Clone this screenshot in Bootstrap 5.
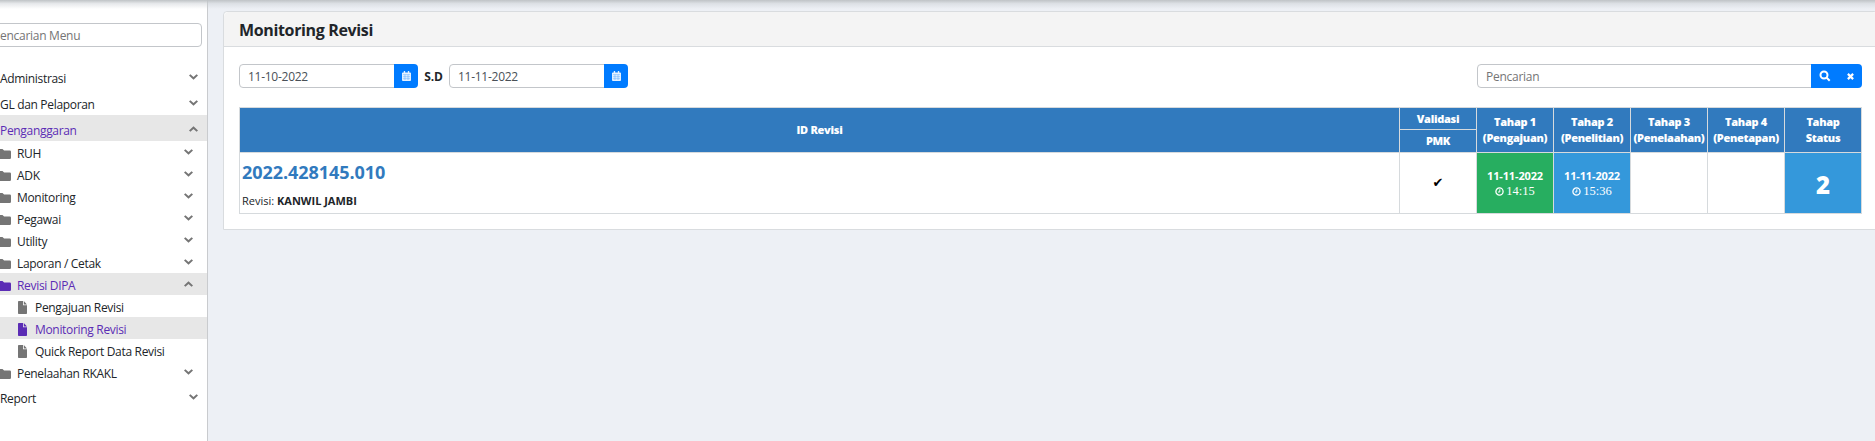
<!DOCTYPE html>
<html lang="id">
<head>
<meta charset="utf-8">
<meta name="viewport" content="width=device-width, initial-scale=1">
<title>Monitoring Revisi</title>
<link href="https://cdn.jsdelivr.net/npm/bootstrap@5.3.0/dist/css/bootstrap.min.css" rel="stylesheet">
<style>
body{font-family:"Open Sans","Noto Sans",sans-serif;font-size:12px;line-height:1.5;color:#212529;background:#edf0f5}
.page{height:441px;overflow:hidden}
.topshade{position:absolute;top:0;left:0;right:0;height:9px;background:linear-gradient(#bfc3c6,rgba(200,205,210,.45) 40%,rgba(220,225,230,0));z-index:5}
.sidebar{width:208px;background:#fff;border-right:1px solid #c9cbce;overflow:hidden}
.menu-search{margin:23px 5px 16px -16px}
.form-control{height:24px;min-height:0;padding:1px 8px 0;font-size:12px;letter-spacing:-.27px;border-color:#c3c6ca;border-radius:4px;color:#495057}
.form-control::placeholder{color:#757575;opacity:1}
.menu a{display:flex;align-items:center;height:22px;color:#212529;text-decoration:none;white-space:nowrap;font-size:12px;letter-spacing:-.32px}
.menu a span{position:relative;top:1.500px}
.menu a.lv1{height:26px;padding-right:9px}
.menu a.lv1 span{top:3px}
.menu a.lv2{padding-right:14px}
.menu a.lv3{padding-left:18px}
.menu a.on{background:#e7e7e7;color:#5b2cb5}
.menu svg{flex:none;fill:#757575}
.menu a.on .ico{fill:#5b2cb5}
.folder{margin:3px 6px 0 -3px}
.file{margin:2px 8px 0 0}
.chev{margin-left:auto;margin-top:-1px}
.lv1 .chev{margin-top:2px}
.panel{margin:11px -3px 0 15px;border:1px solid #d9dcdf;border-radius:4px 4px 0 0;height:219px;background:#fff}
.panel .card-header{height:35px;padding:0 15px;background:#f4f4f4;border-bottom:1px solid #d9dcdf;font-size:16px;font-weight:700;line-height:36px;letter-spacing:-.35px}
.panel .card-body{padding:17px 15px 0}
.date-group{width:179px}
.search-group{width:385px}
.sd{width:31px;text-align:center;letter-spacing:-.2px;position:relative;top:1px}
.btn-blue{background:#007bff;color:#fff;height:24px;padding:0;width:24px;border:0;border-radius:4px;display:flex;align-items:center;justify-content:center}
.btn-blue.wide{width:51px;gap:16px;padding-right:1px}
.grid-table{table-layout:fixed;width:1623px;border-collapse:collapse;margin-top:19px}
.grid-table th,.grid-table td{border:1px solid #d6dadd;padding:0;text-align:center;vertical-align:middle;white-space:nowrap}
.grid-table th{background:#317abe;color:#fff;font-weight:800;font-size:11px;line-height:16px;letter-spacing:-.3px}
.grid-table td.first{text-align:left;padding-left:2px;vertical-align:top}
.rev-id{color:#317abe;font-size:18px;font-weight:700;line-height:24px;margin-top:7px;letter-spacing:-.05px}
.rev-by{font-size:11px;line-height:16px;margin-top:9px}
td.green{background:#27ae60;color:#fff}
td.blue{background:#3498db;color:#fff}
.tgl{font-size:11px;font-weight:700;line-height:15px;letter-spacing:-.15px}
.jam{font:12.5px/16px "Liberation Serif",serif}
.jam svg{margin-right:2px}
.big{font-size:24px;font-weight:800}
.grid-table td.big{padding-top:3px}
.tick{color:#000;font-size:13px;font-family:"DejaVu Sans",sans-serif}
</style>
</head>
<body>
<svg class="d-none">
<symbol id="down" viewBox="0 0 9 6"><path d="M0 1.5 1.4.2 4.5 2.9 7.6.2 9 1.5 4.5 5.8z"/></symbol>
<symbol id="up" viewBox="0 0 9 6"><path d="M0 4.5 1.4 5.8 4.5 3.1 7.6 5.8 9 4.5 4.5.2z"/></symbol>
<symbol id="folder" viewBox="0 0 14 10"><path d="M1.2 0h4.3l1.6 1.6h5.7q1.2 0 1.2 1.2v6q0 1.2-1.2 1.2H1.2Q0 10 0 8.800V1.200Q0 0 1.200 0z"/></symbol>
<symbol id="file" viewBox="0 0 9 13"><path d="M.8 0H5v4.200h4V12.200q0 .8-.8.8H.8Q0 13 0 12.200V.8Q0 0 .8 0zM5.800 0 9 3.400H5.800z"/></symbol>
<symbol id="cal" viewBox="0 0 10 11"><path fill="#e6f2ff" d="M1 1.500h1V0h1.500v1.500h3V0H8v1.500h1q1 0 1 1V10q0 1-1 1H1q-1 0-1-1V2.500q0-1 1-1z"/><path stroke="#4da3ff" stroke-width=".5" fill="none" d="M1 4h8M1 6.300h8M1 8.500h8M3.300 4v6M6.700 4v6"/></symbol>
<symbol id="clock" viewBox="0 0 9 9"><circle cx="4.500" cy="4.500" r="3.600" fill="none" stroke="#fff" stroke-width="1.300"/><path d="M4.800 2.300V5H3" fill="none" stroke="#fff"/></symbol>
</svg>
<div class="page d-flex position-relative">
<div class="topshade"></div>
<aside class="sidebar flex-shrink-0">
<div class="menu-search"><input class="form-control" placeholder="Pencarian Menu"></div>
<nav class="menu">
<a class="lv1" href="#"><span>Administrasi</span><svg class="chev" width="9" height="6"><use href="#down"/></svg></a>
<a class="lv1" href="#"><span>GL dan Pelaporan</span><svg class="chev" width="9" height="6"><use href="#down"/></svg></a>
<a class="lv1 on" href="#"><span>Penganggaran</span><svg class="chev" width="9" height="6"><use href="#up"/></svg></a>
<a class="lv2" href="#"><svg class="ico folder" width="14" height="10"><use href="#folder"/></svg><span>RUH</span><svg class="chev" width="9" height="6"><use href="#down"/></svg></a>
<a class="lv2" href="#"><svg class="ico folder" width="14" height="10"><use href="#folder"/></svg><span>ADK</span><svg class="chev" width="9" height="6"><use href="#down"/></svg></a>
<a class="lv2" href="#"><svg class="ico folder" width="14" height="10"><use href="#folder"/></svg><span>Monitoring</span><svg class="chev" width="9" height="6"><use href="#down"/></svg></a>
<a class="lv2" href="#"><svg class="ico folder" width="14" height="10"><use href="#folder"/></svg><span>Pegawai</span><svg class="chev" width="9" height="6"><use href="#down"/></svg></a>
<a class="lv2" href="#"><svg class="ico folder" width="14" height="10"><use href="#folder"/></svg><span>Utility</span><svg class="chev" width="9" height="6"><use href="#down"/></svg></a>
<a class="lv2" href="#"><svg class="ico folder" width="14" height="10"><use href="#folder"/></svg><span>Laporan / Cetak</span><svg class="chev" width="9" height="6"><use href="#down"/></svg></a>
<a class="lv2 on" href="#"><svg class="ico folder" width="14" height="10"><use href="#folder"/></svg><span>Revisi DIPA</span><svg class="chev" width="9" height="6"><use href="#up"/></svg></a>
<a class="lv3" href="#"><svg class="ico file" width="9" height="13"><use href="#file"/></svg><span>Pengajuan Revisi</span></a>
<a class="lv3 on" href="#"><svg class="ico file" width="9" height="13"><use href="#file"/></svg><span>Monitoring Revisi</span></a>
<a class="lv3" href="#"><svg class="ico file" width="9" height="13"><use href="#file"/></svg><span>Quick Report Data Revisi</span></a>
<a class="lv2" href="#"><svg class="ico folder" width="14" height="10"><use href="#folder"/></svg><span>Penelaahan RKAKL</span><svg class="chev" width="9" height="6"><use href="#down"/></svg></a>
<a class="lv1" href="#"><span>Report</span><svg class="chev" width="9" height="6"><use href="#down"/></svg></a>
</nav>
</aside>
<main class="flex-grow-1 overflow-hidden">
<section class="card panel">
<div class="card-header">Monitoring Revisi</div>
<div class="card-body">
<div class="d-flex align-items-center">
<div class="input-group date-group flex-nowrap"><input class="form-control" value="11-10-2022"><button class="btn btn-blue" aria-label="Kalender"><svg width="9" height="10"><use href="#cal"/></svg></button></div>
<strong class="sd">S.D</strong>
<div class="input-group date-group flex-nowrap"><input class="form-control" value="11-11-2022"><button class="btn btn-blue" aria-label="Kalender"><svg width="9" height="10"><use href="#cal"/></svg></button></div>
<div class="input-group search-group flex-nowrap ms-auto"><input class="form-control" placeholder="Pencarian"><button class="btn btn-blue wide" aria-label="Cari"><svg width="12" height="12" viewBox="0 0 12 12" fill="none" stroke="#fff" stroke-width="2"><circle cx="5" cy="5" r="3.500"/><path d="m7.700 7.700 3 3"/></svg><svg width="7" height="7" viewBox="0 0 8 8" stroke="#fff" stroke-width="2.500"><path d="m1 1 6 6M7 1 1 7"/></svg></button></div>
</div>
<table class="grid-table">
<colgroup><col style="width:1160px"><col style="width:77px"><col style="width:77px"><col style="width:77px"><col style="width:77px"><col style="width:77px"><col style="width:77px"></colgroup>
<thead>
<tr style="height:22px"><th rowspan="2">ID Revisi</th><th>Validasi</th><th rowspan="2">Tahap 1<br>(Pengajuan)</th><th rowspan="2">Tahap 2<br>(Penelitian)</th><th rowspan="2">Tahap 3<br>(Penelaahan)</th><th rowspan="2">Tahap 4<br>(Penetapan)</th><th rowspan="2">Tahap<br>Status</th></tr>
<tr style="height:23px"><th>PMK</th></tr>
</thead>
<tbody>
<tr style="height:61px"><td class="first"><div class="rev-id">2022.428145.010</div><div class="rev-by">Revisi: <b>KANWIL JAMBI</b></div></td><td><span class="tick">✔</span></td><td class="green"><div class="tgl">11-11-2022</div><div class="jam"><svg width="9" height="9"><use href="#clock"/></svg>14:15</div></td><td class="blue"><div class="tgl">11-11-2022</div><div class="jam"><svg width="9" height="9"><use href="#clock"/></svg>15:36</div></td><td></td><td></td><td class="blue big">2</td></tr>
</tbody>
</table>
</div>
</section>
</main>
</div>
<script src="https://cdn.jsdelivr.net/npm/bootstrap@5.3.0/dist/js/bootstrap.bundle.min.js"></script>
</body>
</html>
